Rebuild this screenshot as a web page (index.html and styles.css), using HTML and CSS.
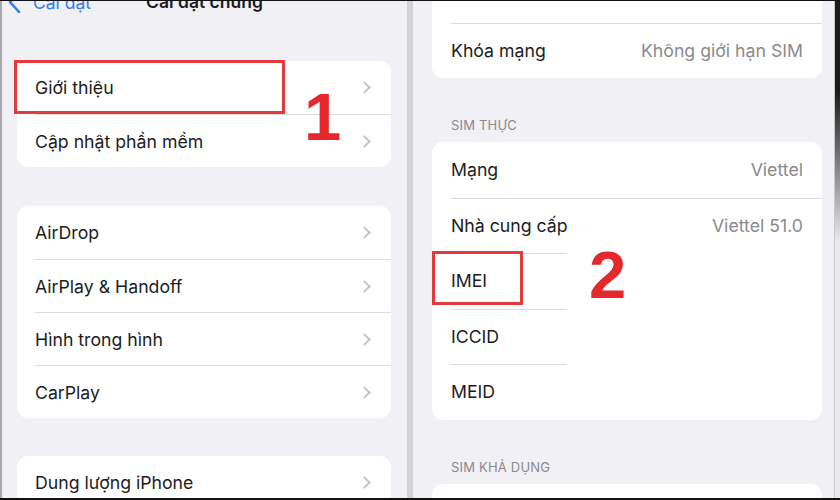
FILE: index.html
```html
<!DOCTYPE html>
<html lang="vi">
<head>
  <meta charset="UTF-8">
  <meta name="viewport" content="width=device-width, initial-scale=1.0">
  <title>Cài đặt chung - IMEI</title>
  <link rel="stylesheet" href="styles.css">
</head>
<body>
  <div class="screen">

    <!-- Cài đặt chung -->
    <section class="pane pane-left">
      <div class="nav">
        <span class="back">
          <svg width="13" height="22" viewBox="0 0 13 22"><path d="M11 1 L2 11 L11 21" fill="none" stroke="#2f7cf6" stroke-width="2.6" stroke-linecap="round" stroke-linejoin="round"/></svg>
          Cài đặt
        </span>
        <span class="nav-title">Cài đặt chung</span>
      </div>

      <div class="group">
        <div class="row"><span class="label">Giới thiệu</span><span class="chev"></span></div>
        <div class="row"><span class="label">Cập nhật phần mềm</span><span class="chev"></span></div>
        <div class="mark mark-about"></div>
        <div class="step step-one">1</div>
      </div>

      <div class="group">
        <div class="row"><span class="label">AirDrop</span><span class="chev"></span></div>
        <div class="row"><span class="label">AirPlay &amp; Handoff</span><span class="chev"></span></div>
        <div class="row"><span class="label">Hình trong hình</span><span class="chev"></span></div>
        <div class="row"><span class="label">CarPlay</span><span class="chev"></span></div>
      </div>

      <div class="group">
        <div class="row"><span class="label">Dung lượng iPhone</span><span class="chev"></span></div>
      </div>
    </section>

    <div class="split"></div>

    <!-- Giới thiệu (cuộn xuống) -->
    <section class="pane pane-right">
      <div class="group group-first">
        <div class="row tall"><span class="label">SEID</span></div>
        <div class="row tall"><span class="label">Khóa mạng</span><span class="value">Không giới hạn SIM</span></div>
      </div>

      <div class="caption">SIM thực</div>
      <div class="group">
        <div class="row tall"><span class="label">Mạng</span><span class="value">Viettel</span></div>
        <div class="row tall"><span class="label">Nhà cung cấp</span><span class="value">Viettel 51.0</span></div>
        <div class="row tall short"><span class="label">IMEI</span></div>
        <div class="row tall short"><span class="label">ICCID</span></div>
        <div class="row tall short"><span class="label">MEID</span></div>
        <div class="mark mark-imei"></div>
        <div class="step step-two">2</div>
      </div>

      <div class="caption">SIM khả dụng</div>
      <div class="group">
        <div class="row tall"><span class="label">&nbsp;</span></div>
      </div>
    </section>

  </div>
</body>
</html>
```

FILE: styles.css
```css
html, body {
  margin: 0;
  padding: 0;
}
body {
  width: 840px;
  height: 500px;
  overflow: hidden;
  background: #111;
  font-family: Inter, "Noto Sans", sans-serif;
  color: #1c1c1e;
}
.screen {
  display: flex;
  height: 497px;
  margin-top: 1px;
  border-left: 2px solid #a9a9ae;
  background: #f0f0f5;
  overflow: hidden;
}
.pane {
  display: flex;
  flex-direction: column;
  overflow: hidden;
}
.pane-left {
  width: 405px;
  flex: none;
}
.split {
  width: 6px;
  flex: none;
  background: #d3d3d7;
}
.pane-right {
  flex: 1;
  border-right: 1px solid #c8c8cc;
}
.screen::after {
  content: "";
  width: 5px;
  flex: none;
  background: linear-gradient(#1b1b1b 0, #1b1b1b 90px, #e9e9ee 240px);
}

/* nav bar, scrolled mostly out of view */
.nav {
  position: relative;
  display: flex;
  justify-content: center;
  align-items: center;
  height: 24px;
  margin-top: -10px;
  font-size: 17.5px;
}
.back {
  position: absolute;
  left: 6px;
  top: 0;
  display: flex;
  align-items: center;
  gap: 12px;
  color: #2f7cf6;
}
.nav-title {
  font-weight: 600;
}

/* grouped list */
.group {
  position: relative;
  flex: none;
  margin: 49px 16px 0 15px;
  background: #fff;
  border-radius: 11px;
}
.pane-left .group + .group {
  margin-top: 39px;
}
.pane-left .group:last-child {
  margin-top: 38px;
}
.row {
  display: flex;
  align-items: center;
  height: 53px;
  margin-left: 18px;
  padding-right: 18px;
  border-top: 1px solid #dcdce0;
  box-sizing: border-box;
  font-size: 17.7px;
}
.row:first-child {
  border-top: 0;
}
.label {
  flex: 1;
}
.value {
  color: #8a8a8e;
}
.chev {
  width: 7px;
  height: 7px;
  margin-right: 4px;
  border-top: 2px solid #c5c5c9;
  border-right: 2px solid #c5c5c9;
  transform: rotate(45deg);
}

/* right pane */
.pane-right .group {
  margin: 0 12px 0 19px;
}
.pane-right .group-first {
  margin-top: -34px;
}
.tall {
  height: 55.5px;
  margin-left: 19px;
  padding-right: 19px;
}
.short {
  border-top: 0;
  background: linear-gradient(#dcdce0, #dcdce0) top left / 116px 1px no-repeat;
}
.caption {
  flex: none;
  margin: 39px 0 9px 38px;
  font-size: 13px;
  line-height: 16px;
  text-transform: uppercase;
  color: #8a8a8e;
  letter-spacing: 0.2px;
}

/* red call-outs */
.mark {
  position: absolute;
  border: 3px solid #e23a3d;
  box-sizing: border-box;
}
.mark-about {
  left: -3px;
  top: -1px;
  width: 271px;
  height: 54px;
}
.mark-imei {
  left: 0;
  top: 109px;
  width: 91px;
  height: 54px;
}
.step {
  position: absolute;
  font-family: "Liberation Sans", Arial, sans-serif;
  font-weight: 700;
  font-size: 67px;
  line-height: 1;
  color: #e5282c;
}
.step-one {
  left: 287px;
  top: 22px;
}
.step-two {
  left: 157px;
  top: 99px;
}
```
